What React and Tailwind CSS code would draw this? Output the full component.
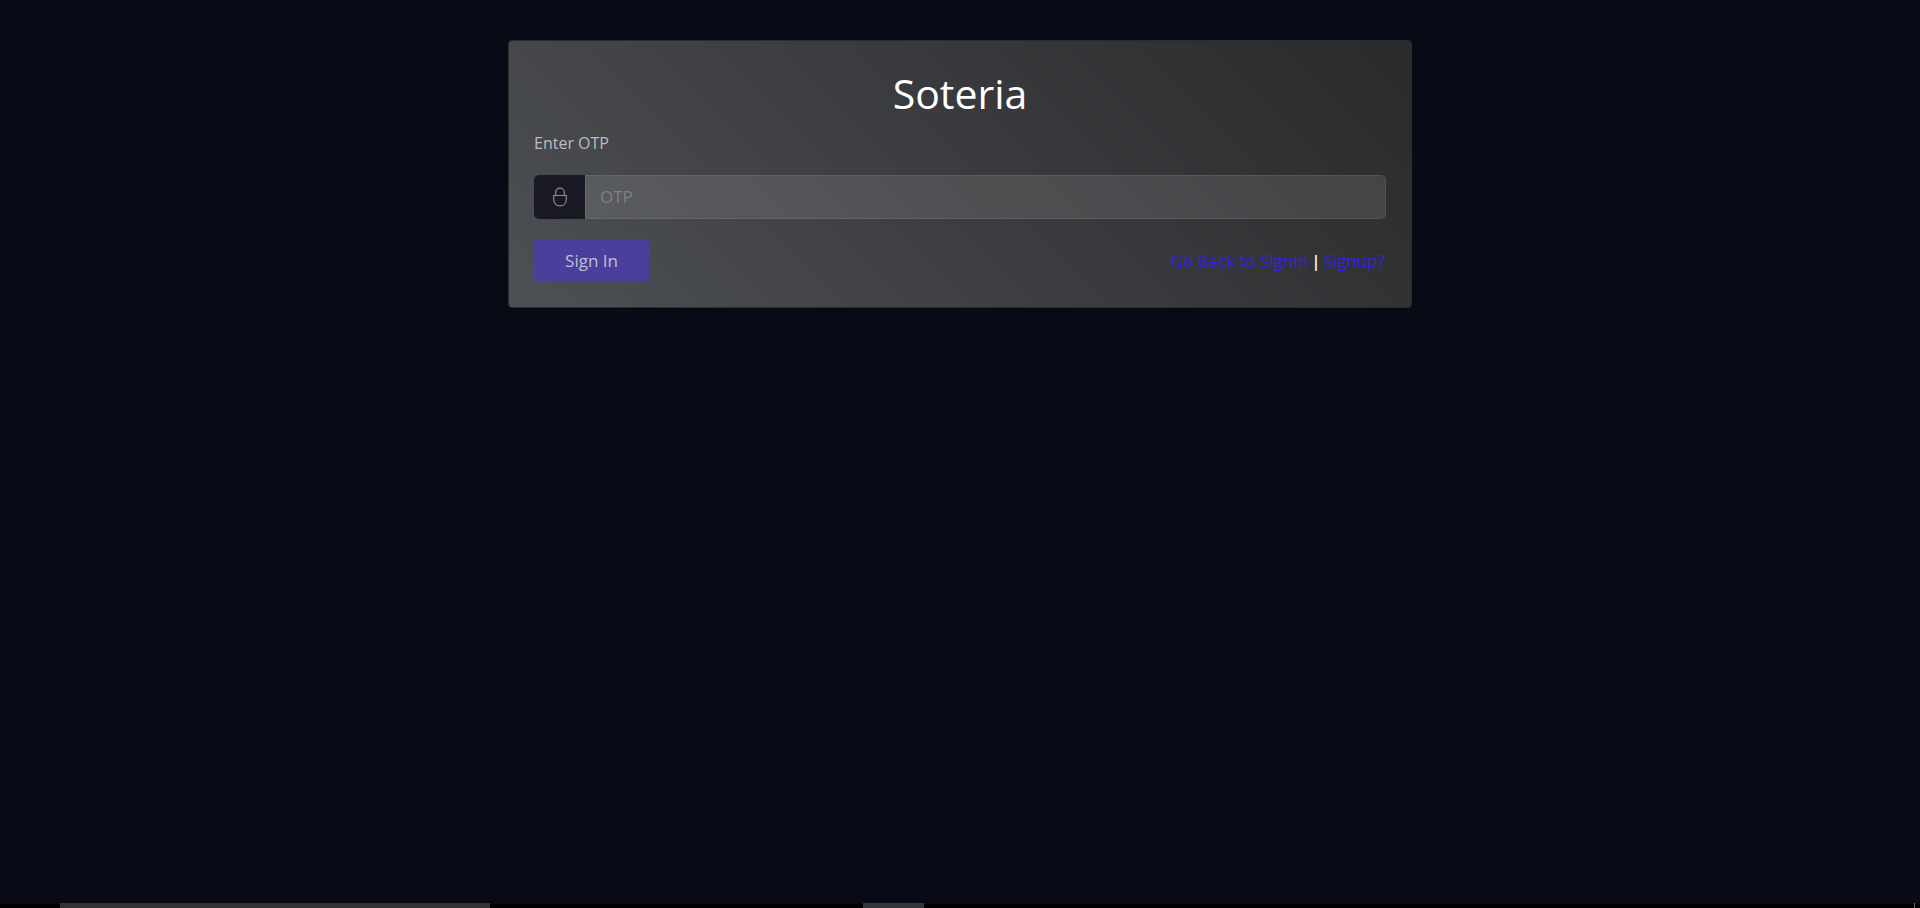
function LockIcon() {
  return (
    <svg className="h-5 w-4" viewBox="0 0 16 20" fill="none" stroke="#8c8c94" strokeWidth="1.2" aria-hidden="true">
      <path d="M3.7 8.5V5.4A4.3 4.3 0 0 1 8 1.1a4.3 4.3 0 0 1 4.3 4.3v3.1" />
      <path d="M1.7 8.5h12.6v4.2c0 3.7-2.5 6.2-6.3 6.2s-6.3-2.5-6.3-6.2z" />
    </svg>
  );
}

function TaskbarEdge() {
  return (
    <div className="flex h-[5px] items-end" aria-hidden="true">
      <div className="h-1 w-[60px] bg-black" />
      <div className="h-[5px] w-[430px] bg-[#333333]" />
      <div className="h-1 w-[373px] bg-black" />
      <div className="h-[5px] w-[61px] bg-[#35363a]" />
      <div className="h-1 grow bg-black" />
      <div className="h-[5px] w-px bg-[#6b6b6b]" />
      <div className="h-1 w-[5px] bg-black" />
    </div>
  );
}

export default function App() {
  return (
    <div className="flex min-h-screen flex-col bg-[#080a16] font-['Open_Sans','Noto_Sans',sans-serif] text-[17px]">
      <main className="flex grow flex-col items-center pt-10">
        <form
          className="w-full max-w-[904px] rounded border border-[#2b2c2f] bg-linear-[45deg,#4d5054,#3b3c3f_50%,#292a2b] p-[25px]"
          onSubmit={(e) => e.preventDefault()}
        >
          <h1 className="mb-2 text-center text-[41px] leading-[55px] text-white">Soteria</h1>
          <label htmlFor="otp" className="mb-[18px] block text-base leading-7 text-[#bcbdbe]">
            Enter OTP
          </label>
          <div className="mb-5 flex h-11">
            <span className="flex w-[51px] items-center justify-center rounded-l-[5px] bg-[#191924]">
              <LockIcon />
            </span>
            <input
              id="otp"
              type="text"
              placeholder="OTP"
              className="min-w-0 grow rounded-r-[5px] border border-white/8 bg-white/10 px-[14px] text-white outline-none placeholder:text-[#7e8083]"
            />
          </div>
          <div className="flex h-[43px] items-center justify-between">
            <button type="submit" className="h-full w-[115px] rounded bg-[#4a3f9b] text-[#c0bed6]">
              Sign In
            </button>
            <div className="flex items-center gap-[3px] pr-px text-[#361fe6]">
              <a href="#signin">Go Back to Signin</a>
              <span className="font-semibold text-white">|</span>
              <a href="#signup">Signup?</a>
            </div>
          </div>
        </form>
      </main>
      <TaskbarEdge />
    </div>
  );
}
